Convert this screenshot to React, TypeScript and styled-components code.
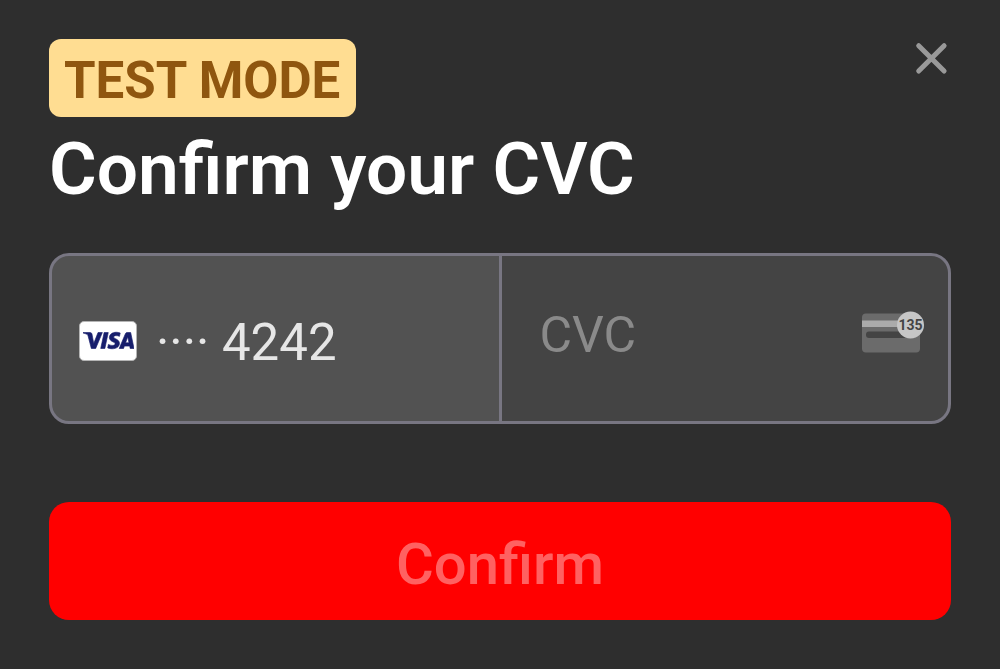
import React, { useState } from "react";
import styled, { createGlobalStyle } from "styled-components";
import { SiVisa } from "react-icons/si";

const GlobalStyle = createGlobalStyle`
  *, *::before, *::after {
    box-sizing: border-box;
  }
  body {
    margin: 0;
    background: #2e2e2e;
    font-family: Roboto, "Liberation Sans", sans-serif;
  }
  button, input {
    font-family: inherit;
  }
`;

const Sheet = styled.main`
  padding: 39px 49px 49px;
`;

const Header = styled.header`
  display: flex;
  justify-content: space-between;
  align-items: flex-start;
`;

const Badge = styled.span`
  padding: 6px 16px 0 15px;
  border-radius: 12px;
  background: #ffdd92;
  color: #8f560f;
  font-size: 51px;
  font-weight: 700;
  line-height: 72px;
`;

const CloseButton = styled.button`
  display: flex;
  padding: 2px;
  border: 0;
  background: none;
  color: #999999;
  cursor: pointer;
`;

const Title = styled.h1`
  margin: 8px 0 0;
  color: #ffffff;
  font-size: 73px;
  font-weight: 600;
  line-height: 88px;
`;

const CardForm = styled.form`
  display: flex;
  flex-direction: column;
  gap: 78px;
  margin-top: 40px;
`;

const CardRow = styled.div`
  display: grid;
  grid-template-columns: 1fr 1fr;
  gap: 3px;
  height: 171px;
  overflow: hidden;
  border: 3px solid #787682;
  border-radius: 20px;
  background: #787682;
`;

const SavedCard = styled.div`
  display: flex;
  align-items: center;
  gap: 19px;
  padding: 4px 27px 0;
  background: #525252;
`;

const CardNumber = styled.span`
  padding-top: 4px;
  color: #e6e6e6;
  font-size: 51px;
  line-height: 60px;
  white-space: pre;
`;

const CvcField = styled.label`
  display: flex;
  min-width: 0;
  align-items: center;
  padding: 0 24px 8px 38px;
  background: #444444;
`;

const CvcInput = styled.input`
  flex: 1;
  width: 100%;
  min-width: 0;
  height: 60px;
  padding: 0;
  border: 0;
  outline: 0;
  background: none;
  color: #e6e6e6;
  font-size: 50px;
  &::placeholder {
    color: #8a8a8a;
    opacity: 1;
  }
`;

const ConfirmButton = styled.button`
  padding: 6px 16px 0;
  border: 0;
  border-radius: 20px;
  background: #ff0000;
  color: #ff6161;
  font-size: 58px;
  font-weight: 500;
  line-height: 112px;
`;

const VisaFrame = styled.span`
  display: flex;
  flex: none;
  align-items: center;
  justify-content: center;
  width: 58px;
  height: 40px;
  border: 1px solid #b4b4b4;
  border-radius: 5px;
  background: #ffffff;
  color: #171e6c;
`;

const CvcGraphic = styled.svg`
  flex: none;
  margin-bottom: 5px;
`;

const CloseIcon = () => (
  <svg width="36" height="36" viewBox="0 0 36 36" aria-hidden="true">
    <path d="M5.7 4.7L31.1 30.1M31.1 4.7L5.7 30.1" stroke="currentColor" strokeWidth="5" strokeLinecap="round" />
  </svg>
);

const CvcIcon = () => (
  <CvcGraphic width="63" height="42" viewBox="0 0 63 42" aria-hidden="true">
    <rect x="1" y="2.5" width="58" height="39" rx="4" fill="#6b6b6b" />
    <rect x="1" y="9.5" width="42" height="6.5" fill="#ababab" />
    <rect x="5" y="20.5" width="50" height="6.5" rx="3" fill="#444444" />
    <circle cx="49.5" cy="14" r="13.5" fill="#c6c6c6" />
    <text
      x="49.5"
      y="19"
      textAnchor="middle"
      fontFamily="Roboto, sans-serif"
      fontWeight="700"
      fontSize="14"
      fill="#444444"
    >
      135
    </text>
  </CvcGraphic>
);

export default function App() {
  const [cvc, setCvc] = useState("");
  return (
    <>
      <GlobalStyle />
      <Sheet>
        <Header>
          <Badge>TEST MODE</Badge>
          <CloseButton type="button" aria-label="Close">
            <CloseIcon />
          </CloseButton>
        </Header>
        <Title>Confirm your CVC</Title>
        <CardForm onSubmit={(event) => event.preventDefault()}>
          <CardRow>
            <SavedCard>
              <VisaFrame>
                <SiVisa size={51} stroke="currentColor" strokeWidth={0.3} aria-label="Visa" />
              </VisaFrame>
              <CardNumber>···· 4242</CardNumber>
            </SavedCard>
            <CvcField>
              <CvcInput
                placeholder="CVC"
                aria-label="CVC"
                inputMode="numeric"
                value={cvc}
                onChange={(event) => setCvc(event.target.value)}
              />
              <CvcIcon />
            </CvcField>
          </CardRow>
          <ConfirmButton type="submit" disabled={cvc.length < 3}>
            Confirm
          </ConfirmButton>
        </CardForm>
      </Sheet>
    </>
  );
}
